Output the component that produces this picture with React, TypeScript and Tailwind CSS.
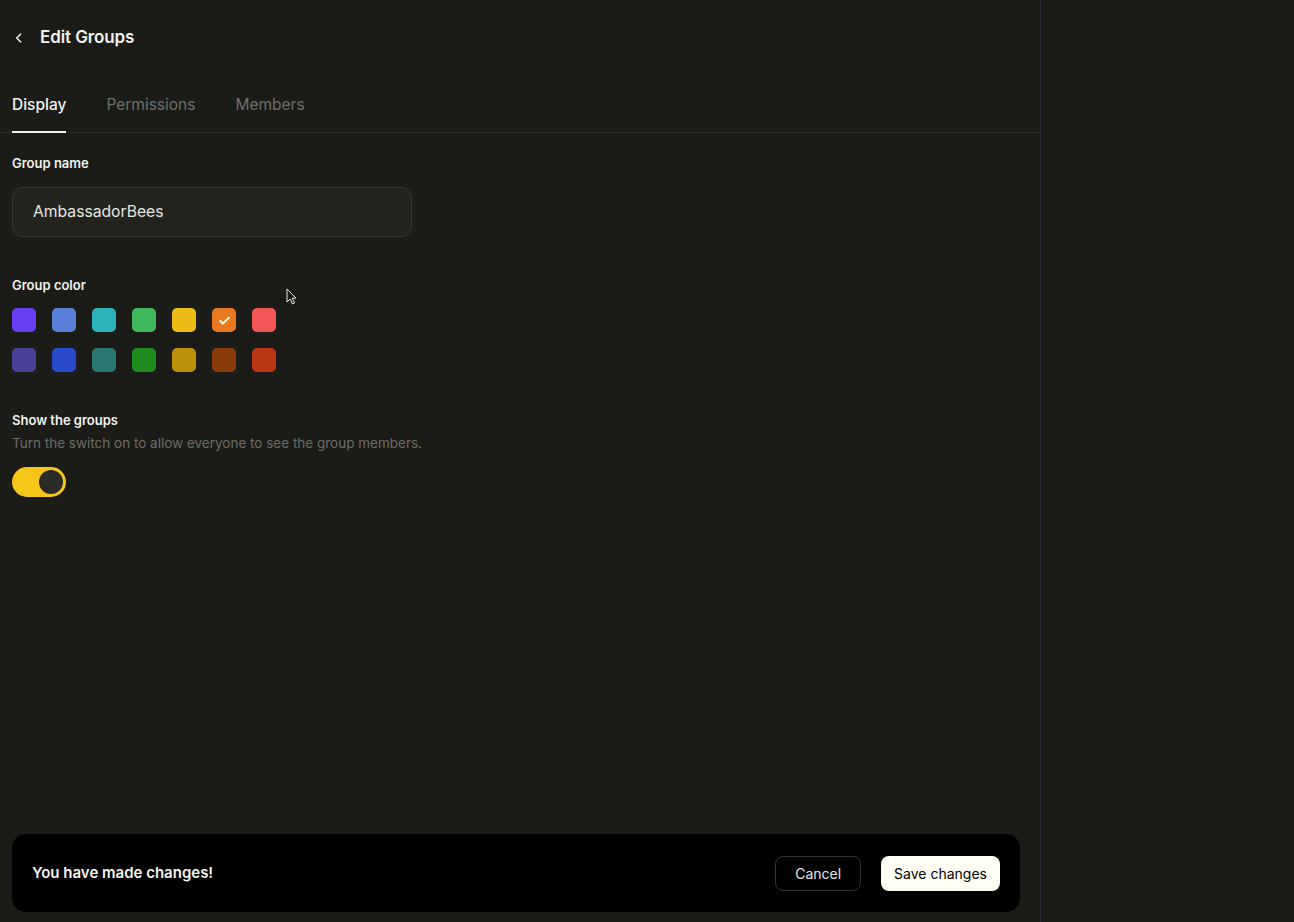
import React from "react";

const topColors = ["#6a3ef2", "#5a7fd8", "#2cb4b8", "#3fb95c", "#e9bb14", "#e97a1e", "#f25757"];
const bottomColors = ["#4b4098", "#2a4ace", "#2b7872", "#1f8b20", "#b8900c", "#8b3b0a", "#b93614"];

function Swatch({ color, checked }: { color: string; checked?: boolean }): React.JSX.Element {
    return (
        <button
            className="w-6 h-6 rounded-[5px] flex items-center justify-center"
            style={{ backgroundColor: color }}
        >
            {checked && (
                <svg width="15" height="15" viewBox="0 0 24 24" fill="none" stroke="#fff" strokeWidth="3" strokeLinecap="round" strokeLinejoin="round">
                    <path d="M5 12.5l4.5 4.5L19 7.5" />
                </svg>
            )}
        </button>
    );
}

function App(): React.JSX.Element {
    return (
        <div
            className="min-h-screen w-full bg-[#1b1c17] flex text-[#f2f2ee]"
            style={{ fontFamily: "Inter, 'Noto Sans', sans-serif" }}
        >
            <div className="relative w-[1041px] h-[922px] border-r border-[#2c2d33] flex flex-col">
                {/* header */}
                <div className="flex items-center gap-[14px] px-3 h-[72px] pt-1">
                    <svg width="14" height="14" viewBox="0 0 24 24" fill="none" stroke="#f2f2ee" strokeWidth="2.5" strokeLinecap="round" strokeLinejoin="round">
                        <path d="M15 5l-7 7 7 7" />
                    </svg>
                    <div className="text-[17px] font-semibold tracking-[-0.1px]">Edit Groups</div>
                </div>

                {/* tabs */}
                <div className="flex gap-10 px-3 border-b border-[#2b2c2c] mt-[11px]">
                    <div className="pt-[10px] pb-[15px] border-b-2 border-[#f2f2ee] text-[15.5px] font-medium -mb-px">Display</div>
                    <div className="pt-[10px] pb-[15px] text-[15.5px] text-[#6e6f69]">Permissions</div>
                    <div className="pt-[10px] pb-[15px] text-[15.5px] text-[#6e6f69]">Members</div>
                </div>

                {/* content */}
                <div className="flex flex-col px-3 pt-[21px]">
                    <div className="text-[13px] font-semibold">Group name</div>
                    <div className="mt-[13px] w-[400px] h-[50px] rounded-[10px] border border-[#34352f] bg-[#22231d] flex items-center px-[20px] text-[15.7px] text-[#e6e6e1]">
                        AmbassadorBees
                    </div>

                    <div className="mt-[39px] text-[13px] font-semibold">Group color</div>
                    <div className="mt-[13px] flex flex-col gap-4">
                        <div className="flex gap-4">
                            {topColors.map((c, i) => (
                                <Swatch key={c} color={c} checked={i === 5} />
                            ))}
                        </div>
                        <div className="flex gap-4">
                            {bottomColors.map((c) => (
                                <Swatch key={c} color={c} />
                            ))}
                        </div>
                    </div>

                    <div className="mt-[39px] text-[13px] font-semibold">Show the groups</div>
                    <div className="mt-[2px] text-[13.5px] text-[#6b6c66]">Turn the switch on to allow everyone to see the group members.</div>
                    <div className="mt-[14px] w-[54px] h-[30px] rounded-full bg-[#f6c51a] flex items-center justify-end pr-[3px]">
                        <div className="w-6 h-6 rounded-full bg-[#2a2a26]"></div>
                    </div>
                </div>

                {/* cursor */}
                <svg className="absolute left-[286px] top-[288px]" width="12" height="18" viewBox="0 0 12 18">
                    <path d="M1 1v13l3.2-3 2.3 5 2-1-2.2-4.8H10z" fill="#1b1c17" stroke="#e8e8e8" strokeWidth="1" />
                </svg>

                {/* changes bar */}
                <div className="mt-auto ml-3 mr-5 mb-[10px] h-[78px] rounded-[14px] bg-black flex items-center px-5">
                    <div className="text-[15px] font-semibold grow">You have made changes!</div>
                    <button className="h-[35px] px-[19px] rounded-lg border border-[#33342f] text-[14px] text-[#e6e6e1]">Cancel</button>
                    <button className="ml-5 h-[35px] px-[13px] rounded-lg bg-[#fffef5] text-[14px] text-black">Save changes</button>
                </div>
            </div>
            <div className="grow"></div>
        </div>
    );
}

export default App;
